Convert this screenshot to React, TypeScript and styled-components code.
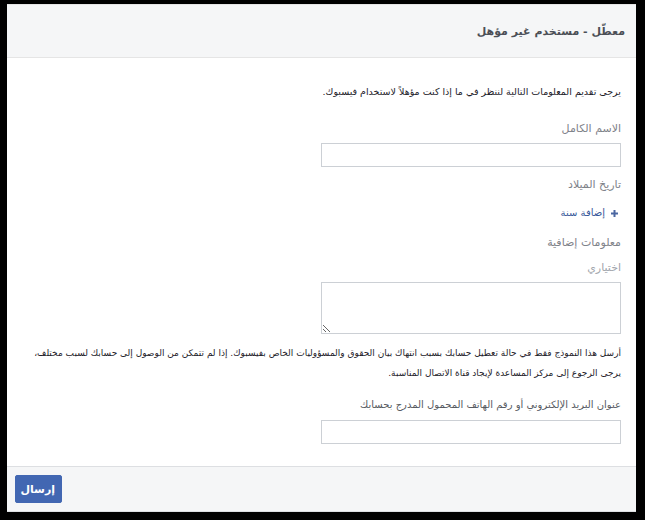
import styled, { createGlobalStyle } from 'styled-components';

const GlobalStyle = createGlobalStyle`
  html, body {
    margin: 0;
    padding: 0;
    background: #000;
  }
  * {
    box-sizing: border-box;
  }
`;

const Frame = styled.div`
  width: 645px;
  height: 520px;
  padding: 4px 9px 8px 7px;
  background: #000;
`;

const Dialog = styled.div`
  height: 100%;
  display: flex;
  flex-direction: column;
  background: #fff;
  direction: rtl;
  font-family: 'DejaVu Sans', Tahoma, sans-serif;
  font-size: 11px;
  color: #1d2129;
`;

const Header = styled.div`
  height: 54px;
  display: flex;
  align-items: center;
  padding: 0 11px;
  background: #f5f6f7;
  border-top: 1px solid #e5e5e5;
  border-bottom: 1px solid #e5e5e5;
`;

const Title = styled.h2`
  margin: 0;
  font-size: 11px;
  font-weight: bold;
  color: #4b4f56;
`;

const Body = styled.div`
  flex: 1;
  padding: 26px 15px 0;
`;

const Text = styled.p<{ $top?: number; $lh?: number; $size?: number }>`
  margin: ${(p) => p.$top ?? 0}px 0 0;
  line-height: ${(p) => p.$lh ?? 16}px;
  font-size: ${(p) => p.$size ?? 9.5}px;
  color: #1d2129;
  white-space: nowrap;
`;

const Label = styled.div<{ $top: number; $bottom?: number; $tone?: string }>`
  margin-top: ${(p) => p.$top}px;
  margin-bottom: ${(p) => p.$bottom ?? 0}px;
  line-height: 16px;
  font-size: ${(p) => (p.$tone === 'strong' ? 10 : 11)}px;
  color: ${(p) =>
    p.$tone === 'muted' ? '#a0a4ab' : p.$tone === 'strong' ? '#575b62' : '#7f838a'};
`;

const Input = styled.input`
  display: block;
  width: 300px;
  height: 24px;
  border: 1px solid #ccd0d5;
  background: #fff;
  font-family: inherit;
  direction: rtl;
`;

const TextArea = styled.textarea`
  display: block;
  width: 300px;
  height: 52px;
  border: 1px solid #ccd0d5;
  font-family: inherit;
  direction: rtl;
  resize: both;
`;

const AddLink = styled.a`
  display: inline-flex;
  align-items: center;
  gap: 6px;
  margin: 12px 3px 0 0;
  line-height: 16px;
  font-size: 10px;
  color: #365899;
  text-decoration: none;
  cursor: pointer;
`;

const Footer = styled.div`
  display: flex;
  justify-content: flex-end;
  padding: 8px;
  background: #f5f6f7;
  border-top: 1px solid #dddfe2;
  border-bottom: 1px solid #dddfe2;
`;

const SubmitButton = styled.button`
  width: 47px;
  height: 28px;
  border: 1px solid #4267b2;
  border-radius: 2px;
  background: #4267b2;
  color: #fff;
  font-family: 'DejaVu Sans', Tahoma, sans-serif;
  font-size: 11px;
  font-weight: bold;
  direction: rtl;
  cursor: pointer;
`;

const PlusIcon = () => (
  <svg width='7' height='7' viewBox='0 0 7 7'>
    <path d='M3.5 0v7M0 3.5h7' stroke='#4b67a1' strokeWidth='2' />
  </svg>
);

const App = () => {
  return (
    <Frame>
      <GlobalStyle />
      <Dialog>
        <Header>
          <Title>معطّل - مستخدم غير مؤهل</Title>
        </Header>

        <Body>
          <Text>يرجى تقديم المعلومات التالية لننظر في ما إذا كنت مؤهلاً لاستخدام فيسبوك.</Text>

          <Label $top={21} $bottom={6}>الاسم الكامل</Label>
          <Input type='text' />

          <Label $top={10}>تاريخ الميلاد</Label>
          <AddLink>
            <PlusIcon />
            إضافة سنة
          </AddLink>

          <Label $top={14}>معلومات إضافية</Label>
          <Label $top={9} $bottom={6} $tone='muted'>اختياري</Label>
          <TextArea />

          <Text $top={9} $lh={20} $size={9}>
            أرسل هذا النموذج فقط في حالة تعطيل حسابك بسبب انتهاك بيان الحقوق والمسؤوليات الخاص بفيسبوك. إذا لم تتمكن من الوصول إلى حسابك لسبب مختلف،
            <br />
            يرجى الرجوع إلى مركز المساعدة لإيجاد قناة الاتصال المناسبة.
          </Text>

          <Label $top={14} $bottom={7} $tone='strong'>
            عنوان البريد الإلكتروني أو رقم الهاتف المحمول المدرج بحسابك
          </Label>
          <Input type='text' />
        </Body>

        <Footer>
          <SubmitButton>إرسال</SubmitButton>
        </Footer>
      </Dialog>
    </Frame>
  );
};

export default App;
